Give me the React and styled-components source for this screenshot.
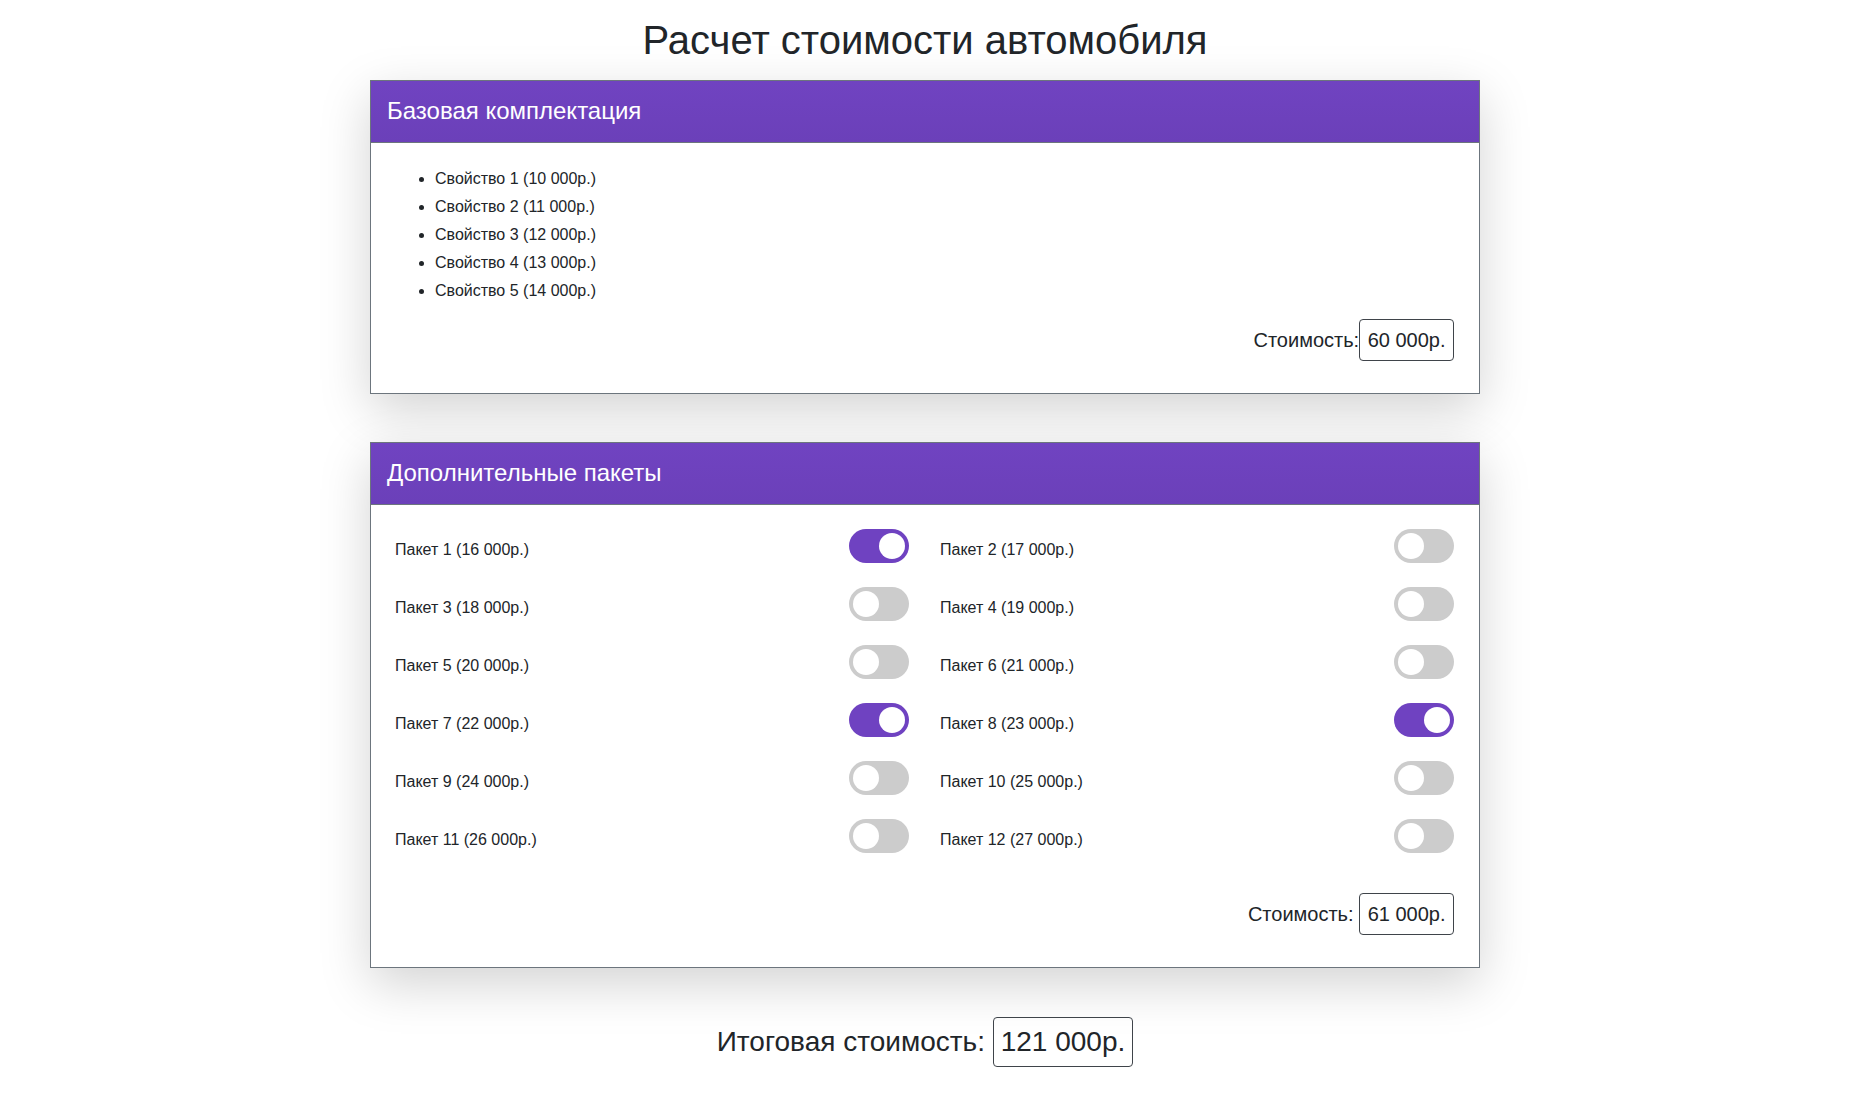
import React, { useState } from 'react';
import styled, { createGlobalStyle } from 'styled-components';

const GlobalStyle = createGlobalStyle`
  body {
    margin: 0;
    background: #fff;
    color: #212529;
    font-family: "Liberation Sans", Arial, sans-serif;
  }
  * { box-sizing: border-box; }
`;

const baseFeatures = [
  { id: 1, name: 'Свойство 1', price: 10000 },
  { id: 2, name: 'Свойство 2', price: 11000 },
  { id: 3, name: 'Свойство 3', price: 12000 },
  { id: 4, name: 'Свойство 4', price: 13000 },
  { id: 5, name: 'Свойство 5', price: 14000 },
];

const packages = Array.from({ length: 12 }, (_, i) => ({
  id: i + 1,
  name: `Пакет ${i + 1}`,
  price: 16000 + i * 1000,
}));

const formatPrice = value => {
  const thousands = Math.floor(value / 1000);
  const rest = String(value % 1000).padStart(3, '0');
  return `${thousands} ${rest}р.`;
};

const Page = styled.div`
  width: 1110px;
  margin: 0 auto;
  padding-top: 16px;
  padding-bottom: 40px;
`;

const Title = styled.h1`
  margin: 0 0 16px;
  font-size: 40px;
  font-weight: 500;
  line-height: 48px;
  text-align: center;
`;

const Card = styled.section`
  border: 1px solid #6c757d;
  background: #fff;
  box-shadow: 0 1rem 3rem rgba(0, 0, 0, 0.175);
  margin-bottom: ${({ $last }) => ($last ? '0' : '48px')};
`;

const CardHeader = styled.h4`
  margin: 0;
  padding: 16px;
  background: linear-gradient(#7043c1, #6b40b9);
  border-bottom: 1px solid #6c757d;
  color: #fff;
  font-size: 24px;
  font-weight: 500;
  line-height: 28.8px;
`;

const CardBody = styled.div`
  padding: ${({ $top }) => $top || 24}px 25px 24px 24px;
`;

const FeatureList = styled.ul`
  margin: 0 0 14px;
  padding-left: 40px;
  font-size: 16px;
  line-height: 28px;
`;

const CostRow = styled.div`
  display: flex;
  justify-content: flex-end;
  align-items: center;
  margin-top: ${({ $mt }) => $mt || 0}px;
  margin-bottom: 8px;
  font-size: 20px;
  line-height: 30px;
  white-space: pre;
`;

const PriceBox = styled.span`
  display: inline-block;
  border: 1px solid #3f444a;
  border-radius: 4px;
  padding: ${({ $big }) => ($big ? '3px 7px' : '5px 7.5px')};
  font-size: ${({ $big }) => ($big ? 28 : 20)}px;
  line-height: ${({ $big }) => ($big ? 42 : 30)}px;
`;

const PackageGrid = styled.div`
  display: grid;
  grid-template-columns: 1fr 1fr;
  column-gap: 31px;
  row-gap: 24px;
`;

const PackageItem = styled.div`
  display: flex;
  justify-content: space-between;
  align-items: center;
  height: 34px;
`;

const PackageLabel = styled.span`
  font-size: 16px;
  padding-top: 9px;
`;

const Switch = styled.button`
  position: relative;
  width: 60px;
  height: 34px;
  padding: 0;
  border: none;
  border-radius: 34px;
  background: ${({ $on }) => ($on ? '#6f42c1' : '#ccc')};
  cursor: pointer;
  flex-shrink: 0;

  &::before {
    content: '';
    position: absolute;
    left: 4px;
    top: 4px;
    width: 26px;
    height: 26px;
    border-radius: 50%;
    background: #fff;
    transform: translateX(${({ $on }) => ($on ? '26px' : '0')});
    transition: transform 0.2s;
  }
`;

const TotalRow = styled.div`
  display: flex;
  justify-content: center;
  align-items: center;
  margin-top: 49px;
  font-size: 28px;
  line-height: 42px;
  white-space: pre;
`;

export default function App () {
  const [selected, setSelected] = useState([1, 7, 8]);

  const baseCost = baseFeatures.reduce((sum, f) => sum + f.price, 0);
  const extraCost = packages
    .filter(p => selected.includes(p.id))
    .reduce((sum, p) => sum + p.price, 0);

  const toggle = id => {
    setSelected(prev => (prev.includes(id) ? prev.filter(x => x !== id) : [...prev, id]));
  };

  return (
    <>
      <GlobalStyle />
      <Page>
        <Title>Расчет стоимости автомобиля</Title>

        <Card>
          <CardHeader>Базовая комплектация</CardHeader>
          <CardBody $top={22}>
            <FeatureList>
              {baseFeatures.map(f => (
                <li key={f.id}>
                  {f.name} ({formatPrice(f.price)})
                </li>
              ))}
            </FeatureList>
            <CostRow>
              Стоимость:
              <PriceBox>{formatPrice(baseCost)}</PriceBox>
            </CostRow>
          </CardBody>
        </Card>

        <Card $last>
          <CardHeader>Дополнительные пакеты</CardHeader>
          <CardBody>
            <PackageGrid>
              {packages.map(p => (
                <PackageItem key={p.id}>
                  <PackageLabel>
                    {p.name} ({formatPrice(p.price)})
                  </PackageLabel>
                  <Switch
                    type="button"
                    aria-label={p.name}
                    $on={selected.includes(p.id)}
                    onClick={() => toggle(p.id)}
                  />
                </PackageItem>
              ))}
            </PackageGrid>
            <CostRow $mt={40}>
              {'Стоимость: '}
              <PriceBox>{formatPrice(extraCost)}</PriceBox>
            </CostRow>
          </CardBody>
        </Card>

        <TotalRow>
          {'Итоговая стоимость: '}
          <PriceBox $big>{formatPrice(baseCost + extraCost)}</PriceBox>
        </TotalRow>
      </Page>
    </>
  );
}
